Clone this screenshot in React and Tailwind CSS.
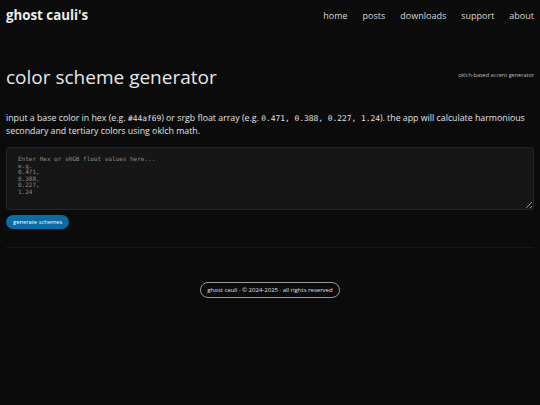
import React from 'react';

const links = ['home', 'posts', 'downloads', 'support', 'about'];

const App = () => {
  return (
    <div className="min-h-[405px] bg-[#0b0b0b] text-[#e6e6e6] font-['Open_Sans',sans-serif]">
      <header className="flex items-center justify-between h-[32px] px-[6px]">
        <div className="text-[13.3px] font-bold text-[#ececec]">ghost cauli's</div>
        <nav className="flex gap-[15px] text-[9px] text-[#d8d8d8]">
          {links.map((l) => (
            <a key={l} href="#">{l}</a>
          ))}
        </nav>
      </header>

      <main className="px-[6px]">
        <div className="flex items-start justify-between mt-[32px]">
          <h1 className="text-[19px] leading-[26px] text-[#e8e8e8]">color scheme generator</h1>
          <span className="text-[5.5px] text-[#bbbbbb] mt-[7px]">oklch-based accent generator</span>
        </div>

        <p className="mt-[22px] text-[8.8px] leading-[13px] text-[#e2e2e2]">
          input a base color in hex (e.g. <code className="font-['DejaVu_Sans_Mono',monospace] text-[7.9px] leading-[10px]">#44af69</code>) or srgb float array (e.g.{' '}
          <code className="font-['DejaVu_Sans_Mono',monospace] text-[7.9px] leading-[10px]">0.471, 0.388, 0.227, 1.24</code>). the app will calculate harmonious secondary and tertiary colors using oklch math.
        </p>

        <textarea
          className="mt-[9px] block w-full h-[63px] bg-[#161616] border border-[#2a2020] rounded-[3px] px-[11px] py-[8px] text-[6px] leading-[6.6px] font-['DejaVu_Sans_Mono',monospace] placeholder:text-[#8a8a8a] outline-none"
          placeholder={'Enter Hex or sRGB float values here...\ne.g.\n0.471,\n0.388,\n0.227,\n1.24'}
        />

        <div className="flex mt-[5px]">
          <button className="h-[14px] px-[7px] rounded-full bg-[#0b6ba3] text-[5.8px] text-white">
            generate schemes
          </button>
        </div>

        <div className="mt-[18px] border-t border-[#1c1515]"></div>
      </main>

      <footer className="flex justify-center mt-[34px]">
        <div className="border border-[#9a9a9a] rounded-full px-[6px] h-[16px] flex items-center text-[6px] text-[#e0e0e0]">
          ghost cauli · © 2024-2025 · all rights reserved
        </div>
      </footer>
    </div>
  );
};

export default App;
